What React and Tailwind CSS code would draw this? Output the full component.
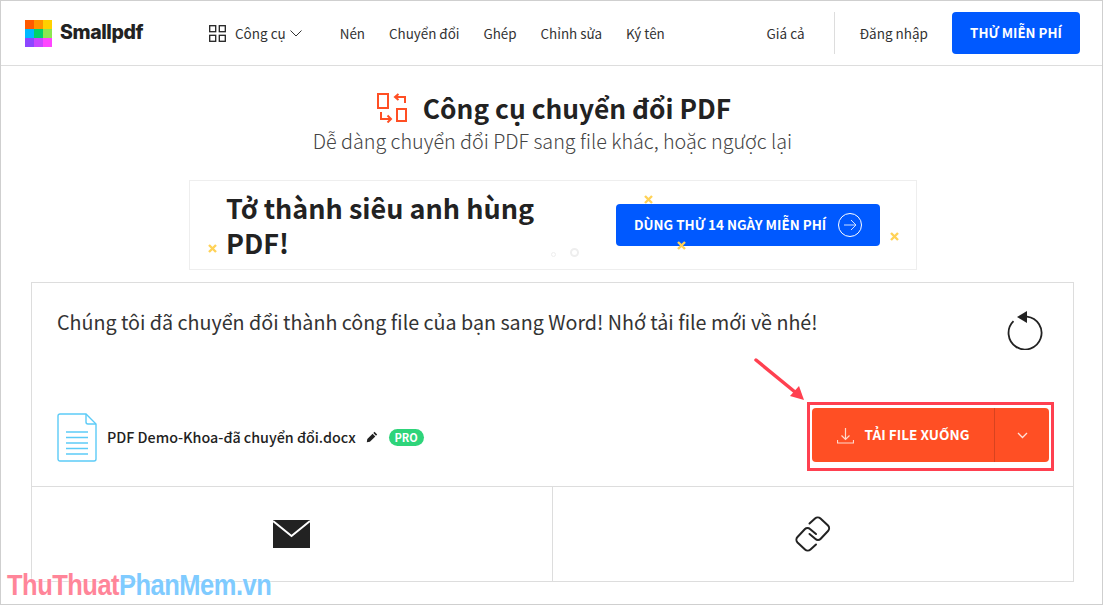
const sans = "font-['Noto_Sans_CJK_SC','Noto_Sans',sans-serif]";

const LOGO_COLORS = ["#ff5a00", "#ff9400", "#ffd100", "#00b9ff", "#00d26a", "#8ce650", "#8c46ff", "#c846ff", "#ff46ff"];

function Logo() {
  return (
    <div className="grid grid-cols-3 w-[27px] h-[27px] shrink-0">
      {LOGO_COLORS.map((c) => (
        <span key={c} style={{ backgroundColor: c }} />
      ))}
    </div>
  );
}

function GridIcon() {
  return (
    <svg width="17" height="17" viewBox="0 0 17 17" fill="none" stroke="#222" strokeWidth="1.3">
      <rect x="0.7" y="0.7" width="6" height="6" />
      <rect x="10.3" y="0.7" width="6" height="6" />
      <rect x="0.7" y="10.3" width="6" height="6" />
      <rect x="10.3" y="10.3" width="6" height="6" />
    </svg>
  );
}

function ConvertIcon() {
  return (
    <svg width="31" height="30" viewBox="0 0 31 30" fill="none" stroke="#ff4f24" strokeWidth="2">
      <rect x="1" y="1" width="10" height="14" />
      <rect x="20" y="16" width="9" height="12" />
      <path d="M28 10V4H18M21.500 1L18 4l3.500 3" />
      <path d="M4 19v7h10M10.500 22.500L14 26l-3.500 3.500" />
    </svg>
  );
}

function Cross({ className }) {
  return (
    <svg className={`absolute ${className}`} width="9" height="9" viewBox="0 0 9 9" stroke="#ffd257" strokeWidth="2.4">
      <path d="M1 1l7 7M8 1l-7 7" />
    </svg>
  );
}

function Doc() {
  return (
    <svg width="40" height="49" viewBox="0 0 40 49" fill="none" stroke="#5ccbf7" strokeWidth="1.4">
      <path d="M3 1h26l10 10v35a2 2 0 0 1-2 2H3a2 2 0 0 1-2-2V3a2 2 0 0 1 2-2z" />
      <path d="M29 1v8a2 2 0 0 0 2 2h8" />
      <path d="M9 19h22M9 24.500h22M9 30h22M9 35.500h22M9 41h22" />
    </svg>
  );
}

function Pencil() {
  return (
    <svg width="12" height="12" viewBox="0 0 12 12" fill="#222">
      <path d="M8.500 0.800l2.700 2.700-1.200 1.200-2.700-2.700zM6.600 2.700l2.700 2.700-5.400 5.300L0.800 11.200l.5-3.100z" />
    </svg>
  );
}

function Refresh() {
  return (
    <svg width="36" height="40" viewBox="0 0 36 40" fill="none">
      <path d="M20 6.600A16.500 16.500 0 1 1 6.500 11.200" stroke="#222" strokeWidth="1.800" />
      <path d="M20 1v12L10 7z" fill="#222" />
    </svg>
  );
}

function Download() {
  return (
    <svg width="17" height="17" viewBox="0 0 17 17" fill="none" stroke="#ffd9cc" strokeWidth="1.2">
      <path d="M8.500 1v11M4.500 8.500l4 4 4-4M0.500 13v3h16v-3" />
    </svg>
  );
}

function Envelope() {
  return (
    <svg width="37" height="28" viewBox="0 0 37 28">
      <path d="M0 0h37v28H0z" fill="#222" />
      <path d="M0 1l18.500 15L37 1" fill="none" stroke="#fff" strokeWidth="2" />
    </svg>
  );
}

function LinkIcon() {
  return (
    <svg width="36" height="36" viewBox="0 0 36 36" fill="none" stroke="#222" strokeWidth="2" strokeLinecap="round">
      <path d="M14.500 7.500l5.500-5a4 4 0 0 1 5.500 0l7.500 7a4 4 0 0 1 0 5.500l-7.500 8a3.500 3.500 0 0 1-5 0l-6-5" />
      <path d="M21 28.500l-5.500 5a4 4 0 0 1-5.500 0l-7.500-7a4 4 0 0 1 0-5.500l7.500-8a3.500 3.500 0 0 1 5 0l6 5" />
    </svg>
  );
}

function Annotation() {
  return (
    <svg className="absolute left-[750px] top-[355px]" width="58" height="48" viewBox="0 0 58 48">
      <path d="M5 4L44 36" stroke="#ff4050" strokeWidth="3.500" strokeLinecap="round" />
      <path d="M53 44L39 40L48 30z" fill="#ff4050" />
    </svg>
  );
}

export default function App() {
  const nav = ["Nén", "Chuyển đổi", "Ghép", "Chỉnh sửa", "Ký tên"];

  return (
    <div className={`relative w-[1103px] h-[605px] overflow-hidden bg-white border border-[#cfcfcf] text-[#222] ${sans}`}>
      {/* Header */}
      <header className="flex items-center h-[65px] pl-[24px] pr-[22px] border-b border-[#ddd]">
        <Logo />
        <span className="ml-[8px] font-['Inter',sans-serif] font-extrabold text-[19.500px] tracking-[-0.4px] w-[85px] whitespace-nowrap">Smallpdf</span>
        <div className="ml-[64px] flex items-center">
          <GridIcon />
          <span className="ml-[9px] text-[13.500px] text-[#333]">Công cụ</span>
          <svg className="ml-[4px]" width="12" height="7" viewBox="0 0 12 7" fill="none" stroke="#333">
            <path d="M0.500 0.500l5.500 5.500 5.500-5.500" />
          </svg>
        </div>
        <nav className="ml-[38px] flex items-center gap-[24px] text-[13.400px] text-[#333]">
          {nav.map((n) => (
            <span key={n}>{n}</span>
          ))}
        </nav>
        <span className="ml-auto text-[13.500px] text-[#333]">Giá cả</span>
        <span className="ml-[29px] h-[42px] w-px bg-[#ddd]" />
        <span className="ml-[25px] text-[13.500px] text-[#333]">Đăng nhập</span>
        <button className="ml-[24px] h-[42px] w-[128px] rounded-[4px] bg-[#0059ff] text-white font-bold text-[13.300px]">THỬ MIỄN PHÍ</button>
      </header>

      {/* Title */}
      <div className="mt-[25px] flex items-center justify-center gap-[15px] pl-[5px]">
        <ConvertIcon />
        <h1 className="text-[26.300px] leading-[33px] font-semibold">Công cụ chuyển đổi PDF</h1>
      </div>
      <p className="pl-[2px] text-center text-[19.750px] leading-[26px] font-light text-[#444] mt-[4px]">Dễ dàng chuyển đổi PDF sang file khác, hoặc ngược lại</p>

      {/* Banner */}
      <div className="relative ml-[188px] mt-[26px] w-[728px] h-[90px] border border-[#eee] flex items-center pl-[36px] pr-[36px] overflow-hidden">
        <h2 className="w-[330px] text-[27px] leading-[35px] font-bold">Tở thành siêu anh hùng PDF!</h2>
        <button className="ml-auto flex items-center justify-between w-[264px] h-[42px] pl-[18px] pr-[18px] pb-[1px] rounded-[4px] bg-[#0059ff] text-white font-bold text-[13.400px]">
          DÙNG THỬ 14 NGÀY MIỄN PHÍ
          <svg width="24" height="24" viewBox="0 0 24 24" fill="none" stroke="#fff" strokeWidth="1">
            <circle cx="12" cy="12" r="11.500" />
            <path d="M6 12h12M13 7l5 5-5 5" stroke="#cfe0ff" />
          </svg>
        </button>
        <Cross className="left-[18px] top-[63px]" />
        <Cross className="left-[454px] top-[14px]" />
        <Cross className="left-[487px] top-[60px]" />
        <Cross className="left-[700px] top-[51px]" />
        <span className="absolute left-[380px] top-[67px] w-[9px] h-[9px] rounded-full border-2 border-[#eee]" />
        <span className="absolute left-[361px] top-[71px] w-[5px] h-[5px] rounded-full border border-[#eee]" />
      </div>

      {/* Result card */}
      <div className="mt-[12px] ml-[30px] w-[1043px] h-[300px] border border-[#ddd] flex flex-col">
        <div className="flex flex-col flex-1 min-h-0 pl-[25px] pr-[24px] pt-[23px]">
          <div className="flex justify-between items-start">
            <p className="text-[19.700px] leading-[32px] text-[#333]">Chúng tôi đã chuyển đổi thành công file của bạn sang Word! Nhớ tải file mới về nhé!</p>
            <div className="mt-[4px] mr-[6px]"><Refresh /></div>
          </div>
          <div className="mt-auto mb-[24px] flex items-center justify-between">
            <div className="mt-[4px] flex items-center">
              <Doc />
              <span className="ml-[10px] text-[14.300px] font-medium">PDF Demo-Khoa-đã chuyển đổi.docx</span>
              <span className="ml-[10px]"><Pencil /></span>
              <span className="ml-[11px] h-[17px] w-[35px] flex items-center justify-center rounded-full bg-[#2ed47a] text-white text-[11px] font-bold">PRO</span>
            </div>
            <div className="flex h-[54px] w-[237px] rounded-[4px] bg-[#ff4f24] text-white">
              <button className="flex-1 flex items-center justify-center gap-[11px] font-bold text-[13.600px]">
                <Download />
                <span className="mb-[2px]">TẢI FILE XUỐNG</span>
              </button>
              <span className="w-px bg-[#d8431f]" />
              <button className="w-[54px] flex items-center justify-center">
                <svg width="11" height="7" viewBox="0 0 11 7" fill="none" stroke="#ffe3da" strokeWidth="1.300">
                  <path d="M1 1l4.500 4.500L10 1" />
                </svg>
              </button>
            </div>
          </div>
        </div>
        <div className="grid grid-cols-2 h-[95px] border-t border-[#ddd]">
          <div className="flex items-center justify-center border-r border-[#ddd]">
            <Envelope />
          </div>
          <div className="flex items-center justify-center">
            <LinkIcon />
          </div>
        </div>
      </div>

      {/* Annotation drawn on the screenshot */}
      <div className="absolute left-[806px] top-[401px] w-[247px] h-[69px] border-[3px] border-[#ff4050]" />
      <Annotation />

      {/* Watermark */}
      <div className="absolute left-[6px] top-[567px] font-['Liberation_Sans',sans-serif] font-bold text-[30px] leading-[34px] tracking-[-0.6px] whitespace-nowrap origin-left scale-x-[0.85] [text-shadow:0_0_3px_#fff]">
        <span className="text-[#ff8599]">ThuThuat</span>
        <span className="text-[#7fcbff]">PhanMem.vn</span>
      </div>
    </div>
  );
}
